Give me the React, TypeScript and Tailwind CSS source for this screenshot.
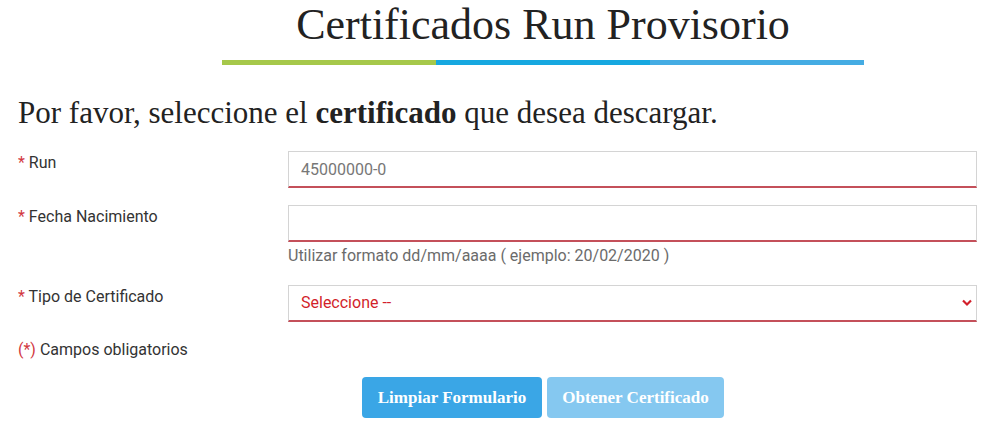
import { useState } from 'react'

const slab = { fontFamily: '"Liberation Serif", "DejaVu Serif", serif' }

function Label({ text }: { text: string }) {
  return (
    <label className="w-[270px] shrink-0 pt-[2px] text-[16px] leading-[20px] text-[#333]">
      <span className="text-[#d2383f]">*</span> {text}
    </label>
  )
}

export default function App() {
  const [run, setRun] = useState('')
  const [fecha, setFecha] = useState('')
  const [tipo, setTipo] = useState('')

  return (
    <div
      className="w-[1004px] h-[443px] overflow-hidden bg-white"
      style={{ fontFamily: 'Roboto, "Liberation Sans", sans-serif' }}
    >
      <div className="w-[1086px]">
        {/* Title */}
        <div className="flex flex-col items-center pt-[1px]">
          <h1 className="text-[44px] leading-[48px] text-[#222] font-normal" style={slab}>
            Certificados Run Provisorio
          </h1>
          <div className="mt-[11px] flex w-[643px] h-[5px]">
            <div className="flex-1 bg-[#a6c84a]" />
            <div className="flex-1 bg-[#16a8e0]" />
            <div className="flex-1 bg-[#45ace3]" />
          </div>
        </div>

        <div className="pl-[18px]">
          <h2 className="mt-[30px] text-[31px] leading-[36px] text-[#222] font-normal" style={slab}>
            Por favor, seleccione el <b className="font-bold">certificado</b> que desea descargar.
          </h2>

          {/* Run */}
          <div className="mt-[20px] flex">
            <Label text="Run" />
            <input
              value={run}
              onChange={(e) => setRun(e.target.value)}
              placeholder="45000000-0"
              className="w-[689px] h-[37px] px-[12px] text-[16px] text-[#333] placeholder:text-[#777] border border-[#d4d4d4] border-b-2 border-b-[#c4505a] outline-none"
            />
          </div>

          {/* Fecha Nacimiento */}
          <div className="mt-[17px] flex">
            <Label text="Fecha Nacimiento" />
            <div>
              <input
                value={fecha}
                onChange={(e) => setFecha(e.target.value)}
                className="w-[689px] h-[37px] px-[12px] text-[16px] text-[#333] border border-[#d4d4d4] border-b-2 border-b-[#c4505a] outline-none"
              />
              <p className="mt-[3px] text-[16px] leading-[22px] text-[#6b6b6b]">
                Utilizar formato dd/mm/aaaa ( ejemplo: 20/02/2020 )
              </p>
            </div>
          </div>

          {/* Tipo de Certificado */}
          <div className="mt-[18px] flex">
            <Label text="Tipo de Certificado" />
            <div className="relative">
              <select
                value={tipo}
                onChange={(e) => setTipo(e.target.value)}
                className="appearance-none w-[689px] h-[37px] px-[12px] text-[16px] text-[#d21f2b] bg-white border border-[#d4d4d4] border-b-2 border-b-[#c4505a] outline-none"
              >
                <option value="">Seleccione --</option>
                <option value="1">Certificado de Nacimiento</option>
              </select>
              <svg
                className="absolute right-[5px] top-[14px] w-[10px] h-[8px] pointer-events-none"
                viewBox="0 0 10 8"
              >
                <path d="M1 1.5 L5 5.5 L9 1.5" stroke="#d21f2b" strokeWidth="2.2" fill="none" />
              </svg>
            </div>
          </div>

          <p className="mt-[17px] text-[16px] leading-[22px] text-[#333]">
            <span className="text-[#d2383f]">(*)</span> Campos obligatorios
          </p>
        </div>

        {/* Buttons */}
        <div className="mt-[16px] flex justify-center gap-[5px]">
          <button
            className="w-[180px] h-[41px] rounded-[4px] bg-[#3aa6e6] text-white text-[17px] font-bold"
            style={slab}
          >
            Limpiar Formulario
          </button>
          <button
            className="w-[177px] h-[41px] rounded-[4px] bg-[#85c8f0] text-white text-[17px] font-bold"
            style={slab}
          >
            Obtener Certificado
          </button>
        </div>
      </div>
    </div>
  )
}
